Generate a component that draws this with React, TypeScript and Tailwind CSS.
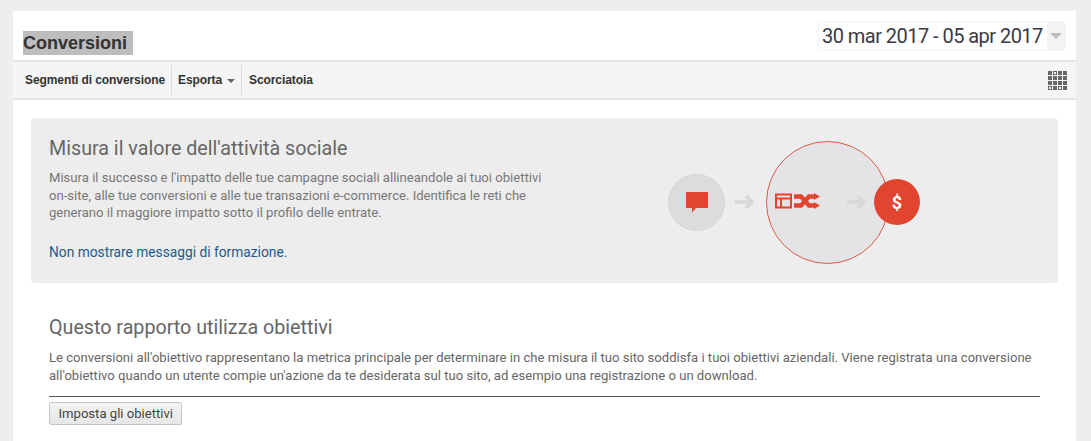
import React from 'react';

const roboto = { fontFamily: 'Roboto, sans-serif' };

const TableIcon = () => {
  const hollow = [1, 12, 14];
  return (
    <div className="grid grid-cols-4 gap-px w-[19px]">
      {Array.from({ length: 16 }).map((_, i) => (
        <div key={i} className={hollow.includes(i) ? 'w-[4px] h-[4px] border border-[#666666]' : 'w-[4px] h-[4px] bg-[#666666]'} />
      ))}
    </div>
  );
};

const Arrow = () => (
  <svg width="22" height="16" viewBox="0 0 22 16" className="shrink-0">
    <path d="M1 8h17M12 2l6 6-6 6" fill="none" stroke="#d8d8da" strokeWidth="3.5" />
  </svg>
);

const Diagram = () => (
  <div className="relative w-[254px] h-[124px] flex items-center">
    <div className="ml-0 w-[57px] h-[57px] rounded-full bg-[#dcdcde] border border-[#d4d4d6] flex items-center justify-center">
      <svg width="22" height="21" viewBox="0 0 22 21">
        <path d="M0 0h22v16H10l-4 4.5V16H0z" fill="#e2452f" />
      </svg>
    </div>
    <div className="ml-[9px]"><Arrow /></div>
    <div className="ml-[10px] w-[123px] h-[123px] rounded-full bg-[#e4e4e7] border border-[#dd5a48] flex items-center pl-[8px] pb-[2px] gap-[2px] shrink-0">
      <svg width="17" height="16" viewBox="0 0 17 16">
        <path d="M1 1.5h15v13H1zM1 5.5h15M6 5.5v9" fill="none" stroke="#e2452f" strokeWidth="2" />
      </svg>
      <svg width="26" height="16" viewBox="0 0 26 16">
        <path d="M0 3.5h7l8 9h6M0 12.5h7l8-9h6" fill="none" stroke="#e2452f" strokeWidth="4.5" />
        <path d="M20 0l6 3.5-6 3.5zM20 9l6 3.5-6 3.5z" fill="#e2452f" />
      </svg>
    </div>
    <div className="absolute left-[178px] top-[54px]"><Arrow /></div>
    <div className="absolute left-[206px] top-[39px] w-[46px] h-[46px] rounded-full bg-[#e2452f] flex items-center justify-center text-white text-[18px] font-bold" style={roboto}>$</div>
  </div>
);

export default function App() {
  return (
    <div className="h-[441px] overflow-hidden bg-[#eeeeee] pt-[11px] pl-[13px] pr-[15px]" style={roboto}>
      <div className="h-full bg-white">
        <div className="h-[49px] flex items-start justify-between pl-[10px] pr-[10px]">
          <h1 className="mt-[20px] h-[24px] w-[110px] bg-[#bdbdbd] text-[18px] leading-[24px] font-bold text-[#333333]" style={{ fontFamily: '"Liberation Sans", sans-serif' }}>Conversioni</h1>
          <div className="mt-[10px] h-[30px] w-[248px] rounded-[4px] border border-[#f2f2f2] flex items-center overflow-hidden">
            <span className="pl-[3px] w-[228px] text-[20px] tracking-[-0.54px] text-[#3a3a46] whitespace-nowrap">30 mar 2017 - 05 apr 2017</span>
            <span className="flex-1 h-full bg-[#f3f3f3] flex items-center justify-center">
              <span className="w-0 h-0 border-x-[6px] border-x-transparent border-t-[6px] border-t-[#bbbbbb]" />
            </span>
          </div>
        </div>

        <div className="h-[40px] bg-[#f5f5f5] border-y-2 border-[#e5e5e5] flex items-center justify-between pr-[9px] text-[12px] font-bold text-[#333333] tracking-[-0.09px]" style={{ fontFamily: '"Liberation Sans", sans-serif' }}>
          <div className="flex items-center h-[30px]">
            <span className="pl-[12px] pr-[6px] leading-[30px]">Segmenti di conversione</span>
            <span className="px-[6px] leading-[30px] border-l border-[#dddddd] flex items-center gap-[5px]">Esporta
              <span className="w-0 h-0 border-x-[4px] border-x-transparent border-t-[4px] border-t-[#666666] mt-[1px]" />
            </span>
            <span className="pl-[7px] leading-[30px] border-l border-[#dddddd]">Scorciatoia</span>
          </div>
          <TableIcon />
        </div>

        <div className="ml-[18px] mr-[18px] mt-[18px] h-[165px] rounded-[4px] bg-[#ededed] flex pl-[18px]">
          <div className="w-[510px] shrink-0 pt-[19px]">
            <h2 className="text-[19.7px] leading-[24px] text-[#666666]">Misura il valore dell'attività sociale</h2>
            <p className="mt-[8px] text-[13.1px] leading-[17.5px] text-[#777777]">
              Misura il successo e l'impatto delle tue campagne sociali allineandole ai tuoi obiettivi on-site, alle tue conversioni e alle tue transazioni e-commerce. Identifica le reti che generano il maggiore impatto sotto il profilo delle entrate.
            </p>
            <p className="mt-[22px] text-[13.75px] leading-[17px] text-[#1f5a8c]">Non mostrare messaggi di formazione.</p>
          </div>
          <div className="ml-[109px] mt-[22px]"><Diagram /></div>
        </div>

        <div className="mx-[36px] mt-[33px]">
          <h2 className="text-[19.7px] leading-[24px] text-[#666666]">Questo rapporto utilizza obiettivi</h2>
          <p className="mt-[9px] text-[13.1px] leading-[18px] text-[#666666]">
            Le conversioni all'obiettivo rappresentano la metrica principale per determinare in che misura il tuo sito soddisfa i tuoi obiettivi aziendali. Viene registrata una conversione all'obiettivo quando un utente compie un'azione da te desiderata sul tuo sito, ad esempio una registrazione o un download.
          </p>
          <div className="mt-[11px] border-t border-[#555555]" />
          <button className="mt-[5px] h-[23px] px-[8.5px] rounded-[2px] border border-[#c4c4c4] bg-gradient-to-b from-[#f5f5f5] to-[#e6e6e6] text-[13.1px] leading-[20px] text-[#444444]">Imposta gli obiettivi</button>
        </div>
      </div>
    </div>
  );
}
